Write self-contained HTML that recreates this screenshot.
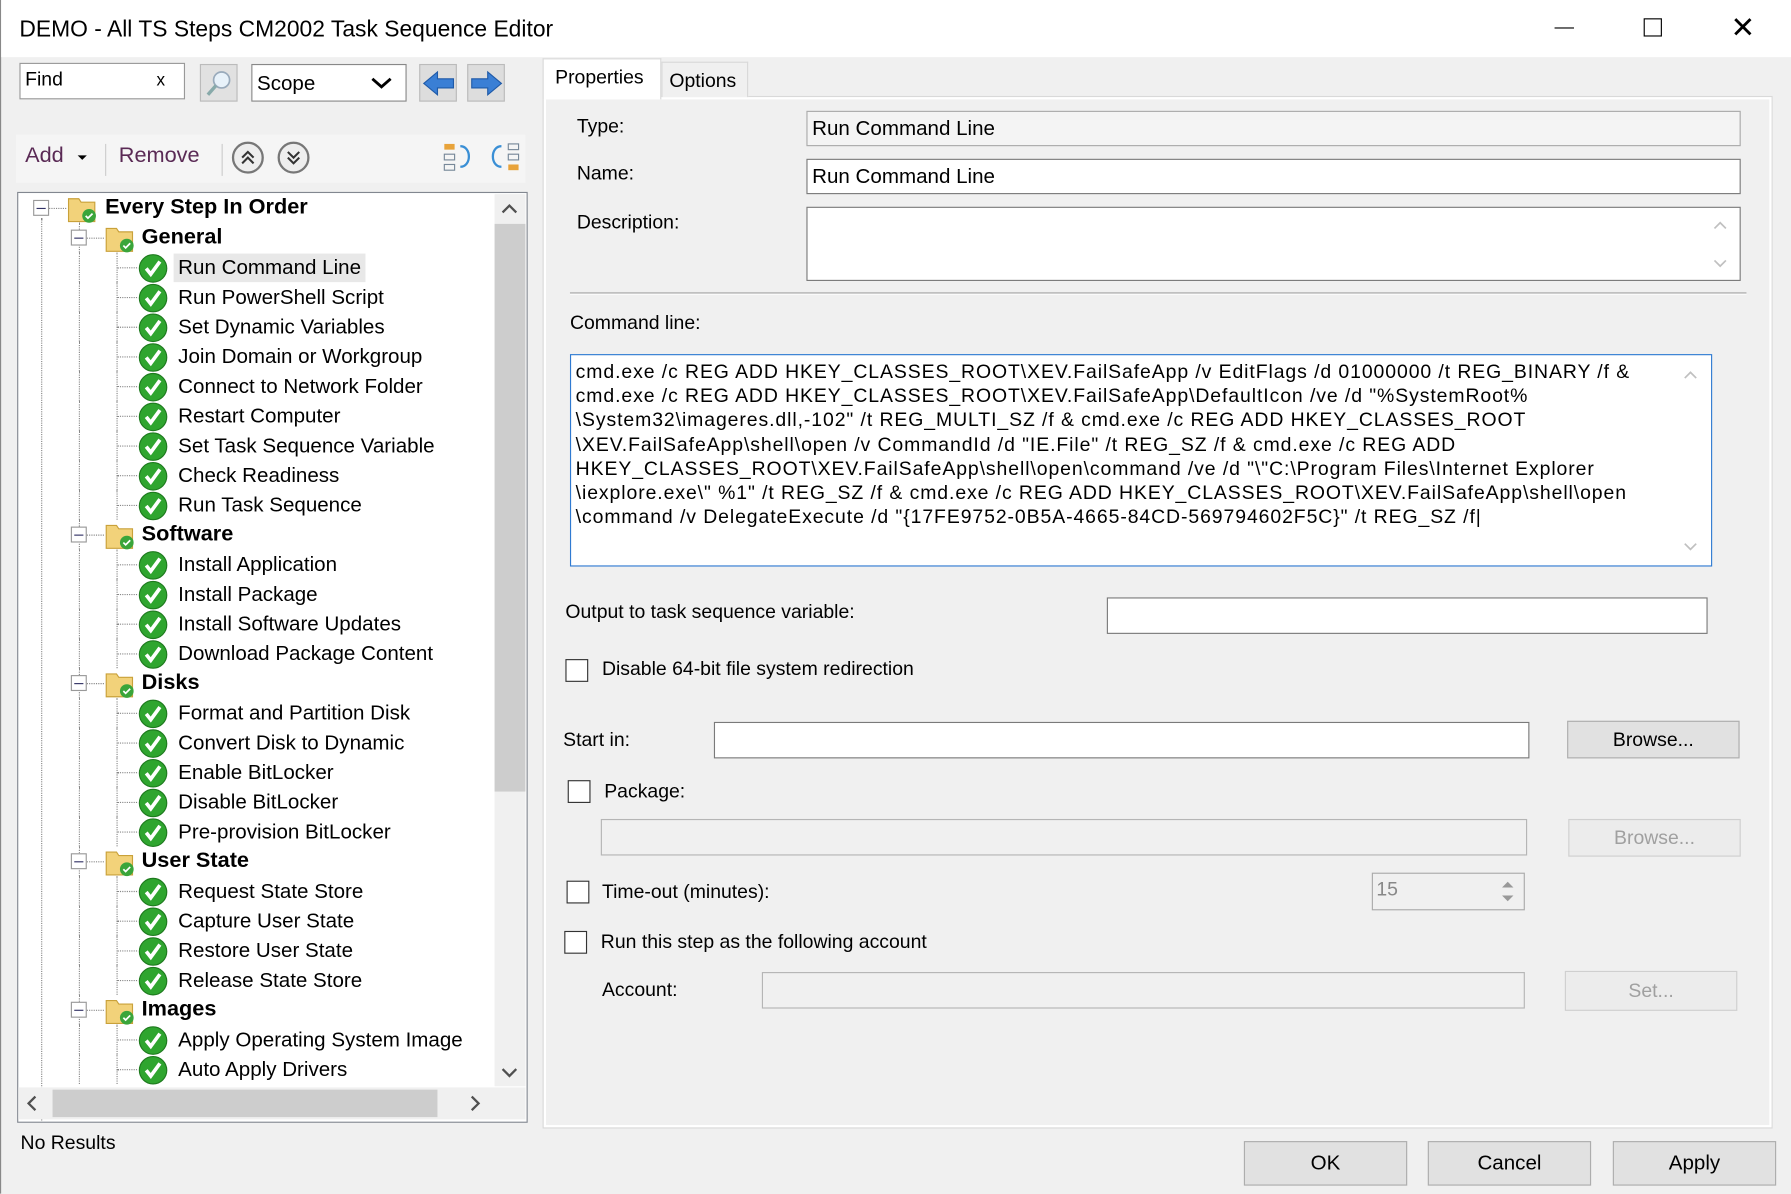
<!DOCTYPE html>
<html><head><meta charset="utf-8"><style>
*{box-sizing:border-box;margin:0;padding:0}
html,body{width:1791px;height:1194px;overflow:hidden;background:#f0f0f0}
#w{position:absolute;left:0;top:0;width:1568px;height:1045px;transform:scale(1.14222);transform-origin:0 0;font-family:"Liberation Sans",sans-serif;color:#000;background:#f0f0f0;border-left:1px solid #888}
.a{position:absolute}
.t{position:absolute;font-size:17px;white-space:nowrap;line-height:20px}
.inp{position:absolute;background:#fff;border:1px solid #7a7a7a}
.btn{position:absolute;background:#e1e1e1;border:1px solid #adadad;font-size:17px;text-align:center}
.dis{color:#a0a0a0;background:#ececec;border-color:#cfcfcf}
.cb{position:absolute;width:20px;height:20px;border:1px solid #333;background:#fff}
.tree .t{font-size:18px}
.b{font-weight:bold}
</style></head><body><div id="w">
<div class="a" style="left:0;top:0;width:1568px;height:50px;background:#fff"></div>
<div class="t" style="left:16px;top:14px;font-size:20px;line-height:24px">DEMO - All TS Steps CM2002 Task Sequence Editor</div>
<div class="a" style="left:1360px;top:24px;width:17px;height:1px;background:#000"></div>
<div class="a" style="left:1438px;top:16px;width:16px;height:16px;border:1px solid #000"></div>
<div class="t" style="left:1514px;top:10px;font-size:26px;line-height:28px;font-weight:300">✕</div>

<div class="inp" style="left:16px;top:55px;width:145px;height:32px;border-color:#999"></div>
<div class="t" style="left:21px;top:60px">Find</div>
<div class="t" style="left:136px;top:61px;font-size:15px">x</div>
<div class="a" style="left:174px;top:56px;width:33px;height:33px;background:#e1e1e1;border:1px solid #bbb"></div>
<svg class="a" style="left:178px;top:59px" width="26" height="26"><circle cx="15" cy="11" r="7" fill="#e8f2fa" stroke="#9ab" stroke-width="1.5"/><line x1="10" y1="16" x2="3" y2="24" stroke="#8aa" stroke-width="3"/></svg>
<div class="inp" style="left:219px;top:56px;width:136px;height:33px;border-color:#888"></div>
<div class="t" style="left:224px;top:63px;font-size:18px">Scope</div>
<svg class="a" style="left:323px;top:67px" width="20" height="12"><path d="M2 2 L10 9 L18 2" fill="none" stroke="#000" stroke-width="2.5"/></svg>
<div class="a" style="left:366px;top:56px;width:33px;height:33px;background:#ddd;border:1px solid #bbb"></div>
<svg class="a" style="left:368px;top:60px" width="30" height="26"><path d="M2 13 L14 3 L14 9 L28 9 L28 17 L14 17 L14 23 Z" fill="#3a7fd5" stroke="#1f5aa8"/></svg>
<div class="a" style="left:408px;top:56px;width:33px;height:33px;background:#ddd;border:1px solid #bbb"></div>
<svg class="a" style="left:410px;top:60px" width="30" height="26"><path d="M28 13 L16 3 L16 9 L2 9 L2 17 L16 17 L16 23 Z" fill="#3a7fd5" stroke="#1f5aa8"/></svg>

<div class="a" style="left:13px;top:118px;width:446px;height:42px;background:#f5f5f5"></div>
<div class="t" style="left:21px;top:127px;font-size:19px;color:#5a2a55">Add</div>
<svg class="a" style="left:66px;top:134px" width="12" height="8"><path d="M1 2 L5 6 L9 2Z" fill="#000"/></svg>
<div class="a" style="left:91px;top:126px;width:1px;height:28px;background:#ccc"></div>
<div class="t" style="left:103px;top:127px;font-size:19px;color:#5a2a55">Remove</div>
<div class="a" style="left:193px;top:126px;width:1px;height:28px;background:#ccc"></div>
<svg class="a" style="left:201px;top:123px" width="80" height="32"><circle cx="15" cy="15" r="13" fill="#eee" stroke="#777" stroke-width="2"/><path d="M10 15 L15 10 L20 15 M10 20 L15 15 L20 20" fill="none" stroke="#333" stroke-width="1.8"/><circle cx="55" cy="15" r="13" fill="#eee" stroke="#777" stroke-width="2"/><path d="M50 10 L55 15 L60 10 M50 15 L55 20 L60 15" fill="none" stroke="#333" stroke-width="1.8"/></svg>
<svg class="a" style="left:386px;top:124px" width="70" height="30"><rect x="2" y="2" width="9" height="5" fill="#e8a33a"/><rect x="2" y="11" width="9" height="5" fill="none" stroke="#789"/><rect x="2" y="20" width="9" height="5" fill="none" stroke="#789"/><path d="M16 4 C26 4 26 22 16 22" fill="none" stroke="#3a8fd5" stroke-width="2"/><rect x="58" y="2" width="9" height="5" fill="none" stroke="#789"/><rect x="58" y="11" width="9" height="5" fill="none" stroke="#789"/><rect x="58" y="20" width="9" height="5" fill="#e8a33a"/><path d="M52 4 C42 4 42 22 52 22" fill="none" stroke="#3a8fd5" stroke-width="2"/></svg>

<div class="a tree" style="left:14px;top:168px;width:447px;height:815px;background:#fff;border:1px solid #828790;overflow:hidden">
<div id="tr"></div>
</div>
<div class="a" style="left:432px;top:170px;width:27px;height:781px;background:#f0f0f0"></div>
<div class="a" style="left:432px;top:196px;width:27px;height:497px;background:#cdcdcd"></div>
<svg class="a" style="left:436px;top:176px" width="18" height="14"><path d="M3 10 L9 4 L15 10" fill="none" stroke="#505050" stroke-width="2"/></svg>
<svg class="a" style="left:436px;top:932px" width="18" height="14"><path d="M3 4 L9 10 L15 4" fill="none" stroke="#505050" stroke-width="2"/></svg>
<div class="a" style="left:15px;top:952px;width:444px;height:28px;background:#f0f0f0"></div>
<div class="a" style="left:45px;top:954px;width:337px;height:24px;background:#cdcdcd"></div>
<svg class="a" style="left:20px;top:958px" width="14" height="16"><path d="M10 2 L4 8 L10 14" fill="none" stroke="#505050" stroke-width="2"/></svg>
<svg class="a" style="left:408px;top:958px" width="14" height="16"><path d="M4 2 L10 8 L4 14" fill="none" stroke="#505050" stroke-width="2"/></svg>
<div class="t" style="left:17px;top:991px">No Results</div>

<div class="a" style="left:474px;top:84px;width:1077px;height:904px;border:1px solid #d9d9d9;background:#fff"></div>
<div class="a" style="left:477px;top:87px;width:1071px;height:898px;background:#f0f0f0"></div>
<div class="a" style="left:474px;top:51px;width:104px;height:36px;background:#fff;border:1px solid #d9d9d9;border-bottom:none"></div>
<div class="t" style="left:485px;top:58px">Properties</div>
<div class="a" style="left:578px;top:54px;width:76px;height:31px;background:#f0f0f0;border:1px solid #d9d9d9;border-bottom:none"></div>
<div class="t" style="left:585px;top:61px">Options</div>

<div class="t" style="left:504px;top:101px">Type:</div>
<div class="inp" style="left:705px;top:97px;width:818px;height:31px;background:#f4f4f4;border-color:#aaa"></div>
<div class="t" style="left:710px;top:102px;font-size:18px">Run Command Line</div>
<div class="t" style="left:504px;top:142px">Name:</div>
<div class="inp" style="left:705px;top:139px;width:818px;height:31px"></div>
<div class="t" style="left:710px;top:144px;font-size:18px">Run Command Line</div>
<div class="t" style="left:504px;top:185px">Description:</div>
<div class="inp" style="left:705px;top:181px;width:818px;height:65px"></div>
<svg class="a" style="left:1496px;top:188px" width="18" height="52"><path d="M4 12 L9 7 L14 12 M4 40 L9 45 L14 40" fill="none" stroke="#c0c0c0" stroke-width="1.5"/></svg>
<div class="a" style="left:498px;top:256px;width:1030px;height:1px;background:#a0a0a0"></div>
<div class="a" style="left:498px;top:257px;width:1030px;height:1px;background:#fff"></div>
<div class="t" style="left:498px;top:273px">Command line:</div>
<div class="inp" style="left:498px;top:310px;width:1000px;height:186px;border-color:#2f7ad1"></div>
<div class="a" style="left:503px;top:315px;font-size:17px;line-height:21.2px;white-space:nowrap;letter-spacing:0.8px">
<div>cmd.exe /c REG ADD HKEY_CLASSES_ROOT\XEV.FailSafeApp /v EditFlags /d 01000000 /t REG_BINARY /f &amp;</div>
<div>cmd.exe /c REG ADD HKEY_CLASSES_ROOT\XEV.FailSafeApp\DefaultIcon /ve /d "%SystemRoot%</div>
<div>\System32\imageres.dll,-102" /t REG_MULTI_SZ /f &amp; cmd.exe /c REG ADD HKEY_CLASSES_ROOT</div>
<div>\XEV.FailSafeApp\shell\open /v CommandId /d "IE.File" /t REG_SZ /f &amp; cmd.exe /c REG ADD</div>
<div>HKEY_CLASSES_ROOT\XEV.FailSafeApp\shell\open\command /ve /d "\"C:\Program Files\Internet Explorer</div>
<div>\iexplore.exe\" %1" /t REG_SZ /f &amp; cmd.exe /c REG ADD HKEY_CLASSES_ROOT\XEV.FailSafeApp\shell\open</div>
<div>\command /v DelegateExecute /d "{17FE9752-0B5A-4665-84CD-569794602F5C}" /t REG_SZ /f|</div>
</div>
<svg class="a" style="left:1470px;top:318px" width="18" height="172"><path d="M4 13 L9 8 L14 13 M4 158 L9 163 L14 158" fill="none" stroke="#c0c0c0" stroke-width="1.5"/></svg>

<div class="t" style="left:494px;top:526px">Output to task sequence variable:</div>
<div class="inp" style="left:968px;top:523px;width:526px;height:32px"></div>
<div class="cb" style="left:494px;top:577px"></div>
<div class="t" style="left:526px;top:576px">Disable 64-bit file system redirection</div>
<div class="t" style="left:492px;top:638px">Start in:</div>
<div class="inp" style="left:624px;top:632px;width:714px;height:32px"></div>
<div class="btn" style="left:1371px;top:631px;width:151px;height:33px;line-height:31px">Browse...</div>
<div class="cb" style="left:496px;top:683px"></div>
<div class="t" style="left:528px;top:683px">Package:</div>
<div class="inp" style="left:525px;top:717px;width:811px;height:32px;background:#f0f0f0;border-color:#b5b5b5"></div>
<div class="btn dis" style="left:1372px;top:717px;width:151px;height:33px;line-height:31px">Browse...</div>
<div class="cb" style="left:495px;top:771px"></div>
<div class="t" style="left:526px;top:771px">Time-out (minutes):</div>
<div class="inp" style="left:1200px;top:764px;width:134px;height:33px;background:#f0f0f0;border-color:#aaa"></div>
<div class="t" style="left:1204px;top:769px;color:#888">15</div>
<svg class="a" style="left:1309px;top:767px" width="20" height="27"><path d="M5 10 L10 5 L15 10Z M5 17 L10 22 L15 17Z" fill="#999"/></svg>
<div class="cb" style="left:493px;top:815px"></div>
<div class="t" style="left:525px;top:815px">Run this step as the following account</div>
<div class="t" style="left:526px;top:857px">Account:</div>
<div class="inp" style="left:666px;top:851px;width:668px;height:32px;background:#f0f0f0;border-color:#b5b5b5"></div>
<div class="btn dis" style="left:1369px;top:850px;width:151px;height:35px;line-height:33px">Set...</div>

<div class="btn" style="left:1088px;top:999px;width:143px;height:39px;line-height:37px;font-size:18px">OK</div>
<div class="btn" style="left:1249px;top:999px;width:143px;height:39px;line-height:37px;font-size:18px">Cancel</div>
<div class="btn" style="left:1411px;top:999px;width:143px;height:39px;line-height:37px;font-size:18px">Apply</div>
</div>
<script>
var rows=[[0,"Every Step In Order"],[1,"General"],[2,"Run Command Line"],[2,"Run PowerShell Script"],[2,"Set Dynamic Variables"],[2,"Join Domain or Workgroup"],[2,"Connect to Network Folder"],[2,"Restart Computer"],[2,"Set Task Sequence Variable"],[2,"Check Readiness"],[2,"Run Task Sequence"],[1,"Software"],[2,"Install Application"],[2,"Install Package"],[2,"Install Software Updates"],[2,"Download Package Content"],[1,"Disks"],[2,"Format and Partition Disk"],[2,"Convert Disk to Dynamic"],[2,"Enable BitLocker"],[2,"Disable BitLocker"],[2,"Pre-provision BitLocker"],[1,"User State"],[2,"Request State Store"],[2,"Capture User State"],[2,"Restore User State"],[2,"Release State Store"],[1,"Images"],[2,"Apply Operating System Image"],[2,"Auto Apply Drivers"]];
var h="",ox=14,oy=168;
h+='<div class="a" style="left:'+(34-ox)+'px;top:'+(190-oy)+'px;height:800px;border-left:1px dotted #888"></div>';
rows.forEach(function(r,i){
 var y=181+i*26-oy;
 if(r[0]==2){h+='<div class="a" style="left:'+(67-ox)+'px;top:'+(y-13)+'px;height:26px;border-left:1px dotted #888"></div>';
  h+='<div class="a" style="left:'+(100-ox)+'px;top:'+(y-13)+'px;height:26px;border-left:1px dotted #888"></div>';
  h+='<div class="a" style="left:'+(100-ox)+'px;top:'+y+'px;width:18px;border-top:1px dotted #888"></div>';
  if(i==2)h+='<div class="a" style="left:'+(150-ox)+'px;top:'+(y-12)+'px;width:168px;height:25px;background:#e8e8e8"></div>';
  h+='<svg class="a" style="left:'+(118-ox)+'px;top:'+(y-13)+'px" width="28" height="28"><circle cx="14" cy="14" r="12" fill="#2fa52f" stroke="#1e7a1e"/><path d="M8 14 L12 19 L20 8" fill="none" stroke="#fff" stroke-width="3.2"/></svg>';
  h+='<div class="t" style="left:'+(154-ox)+'px;top:'+(y-10)+'px">'+r[1]+'</div>';
 } else {
  var bx=r[0]==0?34:67, fx=r[0]==0?56:89, tx=r[0]==0?90:122;
  if(r[0]==1)h+='<div class="a" style="left:'+(67-ox)+'px;top:'+(y-13)+'px;height:26px;border-left:1px dotted #888"></div>';
  h+='<div class="a" style="left:'+(bx-7-ox)+'px;top:'+(y-7)+'px;width:14px;height:14px;border:1px solid #999;background:#fff"></div><div class="a" style="left:'+(bx-4-ox)+'px;top:'+(y)+'px;width:8px;height:1px;background:#336"></div>';
  h+='<div class="a" style="left:'+(bx+7-ox)+'px;top:'+y+'px;width:'+(fx-bx-7)+'px;border-top:1px dotted #888"></div>';
  h+='<svg class="a" style="left:'+(fx-ox)+'px;top:'+(y-13)+'px" width="30" height="28"><path d="M2 5 h9 l2 3 h12 v17 h-23z" fill="#f2d27a" stroke="#c9a13a"/><circle cx="20" cy="20" r="6" fill="#3aa53a"/><path d="M17 20 l2 2 l4-4" fill="none" stroke="#fff" stroke-width="1.5"/></svg>';
  h+='<div class="t b" style="left:'+(tx-ox)+'px;top:'+(y-10)+'px;font-size:19px">'+r[1]+'</div>';
 }
});
document.getElementById("tr").innerHTML=h;
</script>
</body></html>
